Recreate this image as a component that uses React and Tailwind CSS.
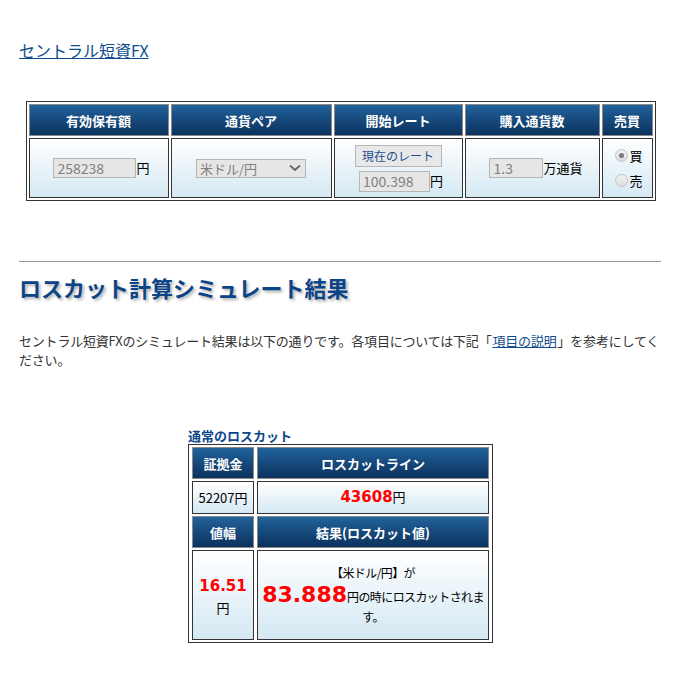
import React from 'react'

const JP = { fontFamily: '"Noto Sans CJK JP", "Liberation Sans", sans-serif' }
const NUM = { fontFamily: '"DejaVu Sans", Verdana, sans-serif' }

const headCell =
  'border border-[#8a8a8a] bg-gradient-to-b from-[#22629c] to-[#0b325d] text-white font-bold text-[13px] leading-none text-center align-middle p-0'
const cellBase =
  'border border-[#333] bg-gradient-to-b from-white to-[#d4e8f3] text-center align-middle p-0 text-black'
const bodyCell = cellBase + ' text-[13px]'
const inputBox =
  'h-[20px] bg-[#e6e6e6] border border-[#b6b6b6] px-[3px] text-[14px] text-[#808080] leading-[18px] outline-none'

function Radio({ checked, label }) {
  return (
    <label className="flex items-center gap-[1px] text-[13px] leading-none text-black">
      <span className="w-[13px] h-[13px] rounded-full border border-[#c4c4c4] bg-gradient-to-b from-[#f2f2f2] to-[#dcdcdc] flex items-center justify-center">
        {checked && <span className="w-[5px] h-[5px] rounded-full bg-[#7a7a7a]" />}
      </span>
      {label}
    </label>
  )
}

function InputTable() {
  return (
    <table className="mx-auto border border-[#333] border-separate border-spacing-[2px]" style={JP}>
      <thead>
        <tr className="h-[32px]">
          <th className={headCell + ' w-[140px]'}>有効保有額</th>
          <th className={headCell + ' w-[161px]'}>通貨ペア</th>
          <th className={headCell + ' w-[129px]'}>開始レート</th>
          <th className={headCell + ' w-[135px]'}>購入通貨数</th>
          <th className={headCell + ' w-[51px]'}>売買</th>
        </tr>
      </thead>
      <tbody>
        <tr className="h-[60px]">
          <td className={bodyCell}>
            <div className="flex items-center justify-center pl-[6px]">
              <input disabled value="258238" className={inputBox + ' w-[83px]'} />
              <span>円</span>
            </div>
          </td>
          <td className={bodyCell}>
            <div className="relative mx-auto w-[110px] h-[19px] bg-[#e6e6e6] border border-[#b6b6b6] text-left text-[13px] leading-[17px] text-[#808080] pl-[3px]">
              米ドル/円
              <svg className="absolute right-[4px] top-[4px]" width="12" height="8" viewBox="0 0 12 8">
                <path d="M1 1.5 L6 6 L11 1.5" fill="none" stroke="#666" strokeWidth="1.8" />
              </svg>
            </div>
          </td>
          <td className={bodyCell}>
            <div className="flex flex-col items-center gap-[4px] pl-[6px]">
              <button
                disabled
                className="w-[87px] h-[22px] bg-[#e8e8e8] border border-[#b6b6b6] text-[12px] leading-none text-[#1b4f8c] mr-[6px]"
              >
                現在のレート
              </button>
              <div className="flex items-center">
                <input disabled value="100.398" className={inputBox + ' w-[71px] h-[21px]'} />
                <span>円</span>
              </div>
            </div>
          </td>
          <td className={bodyCell}>
            <div className="flex items-center justify-center pl-[8px]">
              <input disabled value="1.3" className={inputBox + ' w-[54px]'} />
              <span>万通貨</span>
            </div>
          </td>
          <td className={bodyCell}>
            <div className="flex flex-col items-center gap-[12px] pl-[4px]">
              <Radio checked label="買" />
              <Radio label="売" />
            </div>
          </td>
        </tr>
      </tbody>
    </table>
  )
}

function ResultTable() {
  return (
    <div className="w-[305px] mx-auto" style={JP}>
      <p className="text-[13px] font-bold text-[#0b468a] leading-[16px]">通常のロスカット</p>
      <table className="w-[305px] border border-[#333] border-separate border-spacing-x-[3px] border-spacing-y-[2px]">
        <tbody>
          <tr className="h-[32px]">
            <th className={headCell + ' w-[62px]'}>証拠金</th>
            <th className={headCell}>ロスカットライン</th>
          </tr>
          <tr className="h-[33px]">
            <td className={bodyCell}>52207円</td>
            <td className={bodyCell}>
              <span className="text-[15px] font-bold text-[#ff0000]" style={NUM}>43608</span>円
            </td>
          </tr>
          <tr className="h-[32px]">
            <th className={headCell}>値幅</th>
            <th className={headCell}>結果(ロスカット値)</th>
          </tr>
          <tr className="h-[90px]">
            <td className={bodyCell + ' leading-[22px] pt-[4px]'}>
              <span className="text-[15px] font-bold text-[#ff0000]" style={NUM}>16.51</span>
              <br />円
            </td>
            <td className={cellBase + ' leading-[20px] text-[12px] tracking-[-0.6px]'}>
              【米ドル/円】が
              <br />
              <span className="text-[22px] font-bold text-[#ff0000] leading-[24px] tracking-normal" style={NUM}>83.888</span>
              円の時にロスカットされます。
            </td>
          </tr>
        </tbody>
      </table>
    </div>
  )
}

export default function App() {
  return (
    <div className="min-h-[687px] bg-white pt-[38px] pl-[19px] pr-[20px]" style={JP}>
      <a href="#" className="text-[16px] leading-[20px] text-[#0d4c8e] underline">
        セントラル短資FX
      </a>

      <div className="mt-[39px] -ml-[19px] -mr-[20px]">
        <InputTable />
      </div>

      <hr className="mt-[60px] border-0 border-t border-[#9a9a9a]" />

      <h2
        className="mt-[12px] text-[22px] font-bold leading-[26px] text-[#0b4487]"
        style={{ textShadow: '2px 2px 3px #b0b0b0' }}
      >
        ロスカット計算シミュレート結果
      </h2>

      <p className="mt-[31px] text-[13px] leading-[19px] text-[#333] tracking-[-0.2px]">
        セントラル短資FXのシミュレート結果は以下の通りです。各項目については下記「
        <a href="#" className="text-[#0d4c8e] underline mx-[1px]">項目の説明</a>
        」を参考にしてください。
      </p>

      <div className="mt-[59px] -ml-[19px] -mr-[20px]">
        <ResultTable />
      </div>
    </div>
  )
}
